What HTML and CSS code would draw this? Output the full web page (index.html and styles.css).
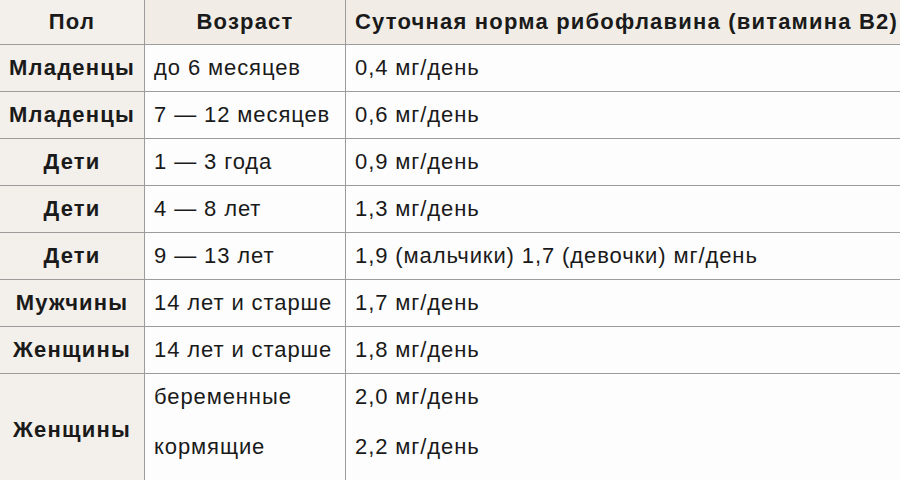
FILE: index.html
```html
<!DOCTYPE html>
<html lang="ru">
<head>
<meta charset="utf-8">
<link rel="stylesheet" href="styles.css">
</head>
<body>
<table class="norm">
  <colgroup>
    <col class="c-sex">
    <col class="c-age">
    <col class="c-dose">
  </colgroup>
  <thead>
    <tr>
      <th class="sex">Пол</th>
      <th class="age-h">Возраст</th>
      <th class="dose-h">Суточная норма рибофлавина (витамина B2)</th>
    </tr>
  </thead>
  <tbody>
    <tr><th class="sex">Младенцы</th><td>до 6 месяцев</td><td>0,4 мг/день</td></tr>
    <tr><th class="sex">Младенцы</th><td>7 — 12 месяцев</td><td>0,6 мг/день</td></tr>
    <tr><th class="sex">Дети</th><td>1 — 3 года</td><td>0,9 мг/день</td></tr>
    <tr><th class="sex">Дети</th><td>4 — 8 лет</td><td>1,3 мг/день</td></tr>
    <tr><th class="sex">Дети</th><td>9 — 13 лет</td><td>1,9 (мальчики) 1,7 (девочки) мг/день</td></tr>
    <tr><th class="sex">Мужчины</th><td>14 лет и старше</td><td>1,7 мг/день</td></tr>
    <tr><th class="sex">Женщины</th><td>14 лет и старше</td><td>1,8 мг/день</td></tr>
    <tr class="last">
      <th class="sex">Женщины</th>
      <td><div class="sub">беременные</div><div class="sub">кормящие</div></td>
      <td><div class="sub">2,0 мг/день</div><div class="sub">2,2 мг/день</div></td>
    </tr>
  </tbody>
</table>
</body>
</html>
```
FILE: styles.css
```css
html, body {
  margin: 0;
  padding: 0;
  background: #fdfdfd;
  overflow: hidden;
}

.norm {
  border-collapse: collapse;
  table-layout: fixed;
  width: 920px;
  margin: -1px 0 0 -1px;
  font-family: "Liberation Sans", Arial, sans-serif;
  font-size: 22px;
  letter-spacing: 0.9px;
  color: #1a1a1a;
}

.c-sex { width: 145px; }
.c-age { width: 201px; }
.c-dose { width: 574px; }

.norm th,
.norm td {
  border: 1px solid #9c9c9c;
  padding: 0 9px;
  height: 46px;
  vertical-align: middle;
  white-space: nowrap;
}

.norm thead th {
  height: 44px;
  background: #f1ede6;
  font-weight: bold;
  letter-spacing: 1.2px;
}

.norm th.sex {
  background: #f3efea;
  font-weight: bold;
  letter-spacing: 1.2px;
  text-align: center;
  padding: 0 2px;
}

.norm td {
  background: #fdfdfd;
  text-align: left;
}

.norm .age-h { text-align: center; }
.norm .dose-h { text-align: left; }

.norm tr.last th,
.norm tr.last td {
  height: 112px;
  padding-top: 0;
  padding-bottom: 0;
}

.norm tr.last td {
  vertical-align: top;
}

.sub {
  height: 46px;
  line-height: 46px;
}
.sub + .sub { margin-top: 4px; }
```
